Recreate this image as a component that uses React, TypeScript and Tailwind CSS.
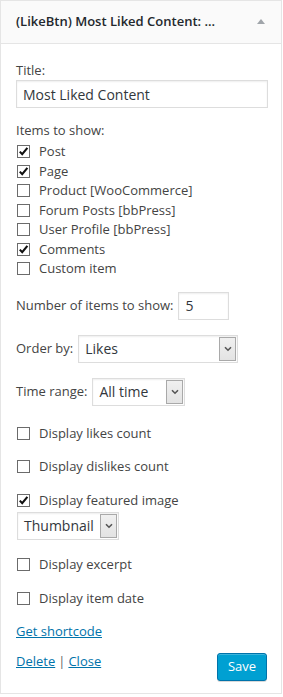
import React from "react";

const font = { fontFamily: '"Open Sans", "Liberation Sans", sans-serif' };

function Check({ checked }: { checked?: boolean }) {
  return (
    <span className="ml-px flex h-[13px] w-[13px] shrink-0 items-center justify-center border border-[#6b6b6b] bg-white">
      {checked ? (
        <svg width="11" height="11" viewBox="0 0 11 11">
          <path d="M1.8 5.6 L4.2 8.2 L9.4 1.8" fill="none" stroke="#111" strokeWidth="2.1" />
        </svg>
      ) : null}
    </span>
  );
}

function CheckRow({ label, checked, h = "h-[19.5px]" }: { label: string; checked?: boolean; h?: string }) {
  return (
    <div className={`flex ${h} items-center gap-[9px]`}>
      <Check checked={checked} />
      <span>{label}</span>
    </div>
  );
}

function Select({ value, width }: { value: string; width: string }) {
  return (
    <div className={`flex h-[28px] ${width} items-stretch border border-[#ddd] bg-white shadow-[inset_0_1px_2px_rgba(0,0,0,0.07)]`}>
      <span className="flex flex-1 items-center pl-[6px] text-[14px] text-[#32373c]">{value}</span>
      <span className="my-px mr-px flex w-[17px] items-center justify-center border border-[#a9a9a9] bg-gradient-to-b from-[#f0f0f0] to-[#e3e3e3]">
        <svg width="8" height="6" viewBox="0 0 8 6">
          <path d="M1 1.2 L4 4.2 L7 1.2" fill="none" stroke="#555" strokeWidth="1.6" />
        </svg>
      </span>
    </div>
  );
}

export default function App() {
  return (
    <div className="bg-white" style={font}>
      <div className="w-[282px] border border-[#e5e5e5] bg-white text-[13px] text-[#444]">
        <div className="flex h-[43px] items-center justify-between border-b border-[#e5e5e5] bg-[#fafafa] pl-[15px] pr-[16px]">
          <h3 className="text-[13px] font-semibold text-[#23282d]">(LikeBtn) Most Liked Content: ...</h3>
          <svg width="8" height="5" viewBox="0 0 8 5" className="mb-[2px]">
            <path d="M0 5 L4 0 L8 5 Z" fill="#a0a5aa" />
          </svg>
        </div>

        <div className="pl-[15px] pr-[13px] pt-[17px] pb-[12px]">
          <div className="leading-[18px]">Title:</div>
          <div className="mt-px flex h-[28px] items-center border border-[#ddd] px-[6px] text-[14px] text-[#32373c] shadow-[inset_0_1px_2px_rgba(0,0,0,0.07)]">
            Most Liked Content
          </div>

          <div className="mt-[13px] leading-[18px]">Items to show:</div>
          <div className="mt-[3px]">
            <CheckRow label="Post" checked />
            <CheckRow label="Page" checked />
            <CheckRow label="Product [WooCommerce]" />
            <CheckRow label="Forum Posts [bbPress]" />
            <CheckRow label="User Profile [bbPress]" />
            <CheckRow label="Comments" checked />
            <CheckRow label="Custom item" />
          </div>

          <div className="mt-[13px] flex items-center gap-[5px]">
            <span>Number of items to show:</span>
            <span className="flex h-[28px] w-[51px] items-center border border-[#ddd] px-[6px] text-[14px] text-[#32373c] shadow-[inset_0_1px_2px_rgba(0,0,0,0.07)]">
              5
            </span>
          </div>

          <div className="mt-[15px] flex items-center gap-[5px]">
            <span>Order by:</span>
            <Select value="Likes" width="w-[160px]" />
          </div>

          <div className="mt-[15px] flex items-center gap-[5px]">
            <span>Time range:</span>
            <Select value="All time" width="w-[93px]" />
          </div>

          <div className="mt-[18px]">
            <CheckRow label="Display likes count" h="h-[20px]" />
          </div>
          <div className="mt-[13px]">
            <CheckRow label="Display dislikes count" h="h-[20px]" />
          </div>
          <div className="mt-[14px]">
            <CheckRow label="Display featured image" checked h="h-[20px]" />
          </div>
          <div className="ml-px mt-px">
            <Select value="Thumbnail" width="w-[102px]" />
          </div>
          <div className="mt-[15px]">
            <CheckRow label="Display excerpt" h="h-[20px]" />
          </div>
          <div className="mt-[14px]">
            <CheckRow label="Display item date" h="h-[20px]" />
          </div>

          <div className="mt-[13px] leading-[18px]">
            <a href="#" className="text-[#0073aa] underline">Get shortcode</a>
          </div>

          <div className="mt-[12px] flex items-start justify-between">
            <div className="leading-[18px]">
              <a href="#" className="text-[#0073aa] underline">Delete</a>
              <span className="mx-[3px] text-[#666]">|</span>
              <a href="#" className="text-[#0073aa] underline">Close</a>
            </div>
            <button className="mr-px mt-px h-[28px] w-[50px] rounded-[3px] border border-[#0073aa] bg-[#00a0d2] text-[13px] text-white shadow-[inset_0_1px_0_rgba(120,200,230,0.5),0_1px_0_rgba(0,0,0,0.15)]">
              Save
            </button>
          </div>
        </div>
      </div>
    </div>
  );
}
